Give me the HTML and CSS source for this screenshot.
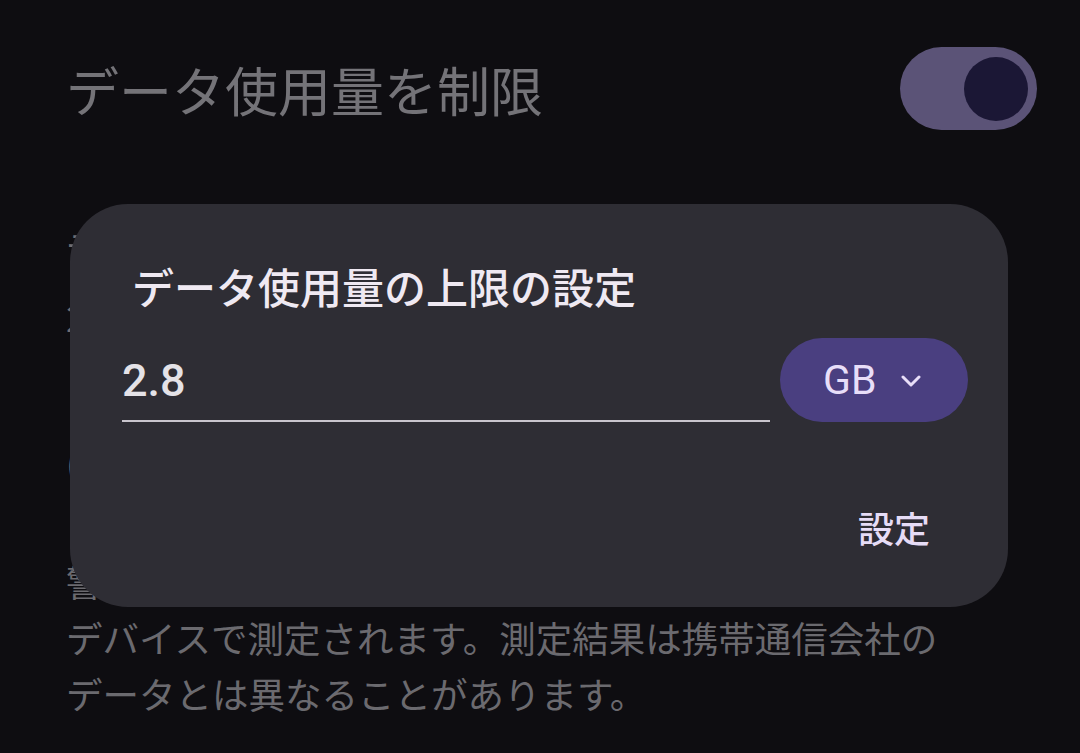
FILE: index.html
```html
<!DOCTYPE html>
<html lang="ja">
<head>
<meta charset="utf-8">
<link rel="stylesheet" href="styles.css">
</head>
<body>
<div class="screen">
  <div class="header-row">
    <div class="page-title">データ使用量を制限</div>
    <div class="toggle"><div class="thumb"></div></div>
  </div>
  <div class="item">
    <div class="item-title">データ上限</div>
    <div class="item-sub">2.80 GB</div>
  </div>
  <div class="item-paren">(</div>
  <div class="footer">警告とデータ上限の値はお使いの<br>デバイスで測定されます。測定結果は携帯通信会社の<br>データとは異なることがあります。</div>

  <div class="dialog">
    <div class="dialog-title">データ使用量の上限の設定</div>
    <div class="input-row">
      <div class="field"><span class="field-value">2.8</span></div>
      <div class="unit-btn">
        <span class="unit-label">GB</span>
        <svg class="chev" width="20" height="12" viewBox="0 0 20 12"><path d="M2 2 L10 10 L18 2" fill="none" stroke="#e8def8" stroke-width="3" stroke-linecap="round" stroke-linejoin="round"/></svg>
      </div>
    </div>
    <div class="actions"><span class="action">設定</span></div>
  </div>
</div>
</body>
</html>
```

FILE: styles.css
```css
* { box-sizing: border-box; }
html, body { margin: 0; padding: 0; }
body {
  width: 1080px;
  height: 753px;
  overflow: hidden;
  background: #0e0d11;
  font-family: "Noto Sans CJK JP", "Noto Sans", sans-serif;
}
.screen {
  position: relative;
  width: 1080px;
  height: 753px;
  padding: 47px 43px 0 66px;
}
.header-row {
  display: flex;
  align-items: center;
  justify-content: space-between;
  height: 83px;
}
.page-title {
  font-size: 53px;
  line-height: 60px;
  color: #747378;
}
.toggle {
  width: 137px;
  height: 83px;
  border-radius: 42px;
  background: #5b5377;
  display: flex;
  align-items: center;
  justify-content: flex-end;
  padding-right: 9px;
}
.thumb {
  width: 64px;
  height: 64px;
  border-radius: 50%;
  background: #1b1735;
}
.item {
  margin-top: 88px;
  color: #6e6d72;
  font-size: 36px;
  line-height: 56px;
}
.item-sub { margin-top: 14px; }
.item-paren {
  margin-top: 90px;
  color: #6e6d72;
  font-size: 36px;
  line-height: 56px;
}
.footer {
  position: absolute;
  left: 66px;
  top: 554px;
  color: #6b6a6f;
  font-size: 36.5px;
  line-height: 56px;
  white-space: nowrap;
}
.dialog {
  position: absolute;
  left: 70px;
  top: 204px;
  width: 938px;
  height: 403px;
  border-radius: 58px;
  background: #2e2d34;
  padding: 57px 40px 0 52px;
  display: flex;
  flex-direction: column;
}
.dialog-title {
  margin-left: 10px;
  font-size: 42px;
  line-height: 50px;
  font-weight: 500;
  color: #efe9f2;
}
.input-row {
  margin-top: 27px;
  display: flex;
  align-items: stretch;
  gap: 10px;
  height: 84px;
}
.field {
  flex: 1;
  display: flex;
  align-items: flex-end;
  border-bottom: 2px solid #c9c5cd;
  padding-bottom: 17px;
}
.field-value {
  font-family: Roboto, "Noto Sans", sans-serif;
  font-size: 45px;
  line-height: 45px;
  font-weight: 500;
  color: #e4e2e7;
}
.unit-btn {
  width: 188px;
  border-radius: 42px;
  background: #4a3f80;
  display: flex;
  align-items: center;
  padding-left: 43px;
  gap: 25px;
}
.unit-label {
  font-family: Roboto, "Noto Sans", sans-serif;
  font-size: 41px;
  line-height: 48px;
  color: #e8def8;
}
.chev { display: block; margin-top: 2px; }
.actions {
  margin-top: 80px;
  display: flex;
  justify-content: flex-end;
  padding-right: 38px;
}
.action {
  font-size: 36px;
  line-height: 50px;
  font-weight: 500;
  color: #e6dcf6;
}
```
